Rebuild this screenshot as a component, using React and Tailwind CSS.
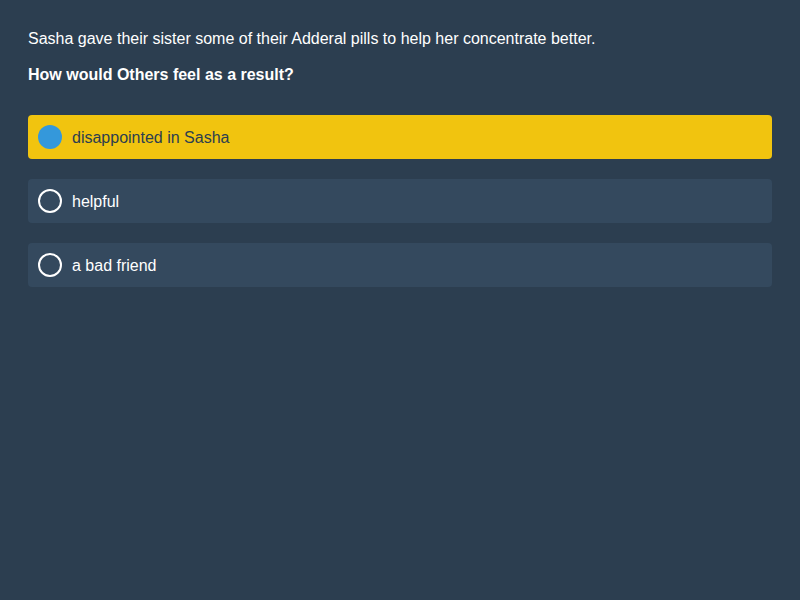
const options = [
  { label: "disappointed in Sasha", selected: true },
  { label: "helpful", selected: false },
  { label: "a bad friend", selected: false },
];

export default function App() {
  return (
    <div className="min-h-screen w-full bg-[#2c3e50] px-[28px] pt-[29px] text-white font-['Liberation_Sans',Arial,sans-serif] text-[16px]">
      <p className="leading-[20px]">
        Sasha gave their sister some of their Adderal pills to help her concentrate better.
      </p>
      <p className="mt-[16px] leading-[20px] font-bold">How would Others feel as a result?</p>

      <div className="mt-[30px] flex flex-col gap-[20px]">
        {options.map(o => (
          <div
            key={o.label}
            className={`flex h-[44px] items-center gap-[10px] rounded-[4px] px-[10px] ${
              o.selected ? "bg-[#f1c40f] text-[#2c3e50]" : "bg-[#34495e] text-white"
            }`}
          >
            {o.selected ? (
              <span className="h-[24px] w-[24px] shrink-0 rounded-full bg-[#3498db]" />
            ) : (
              <span className="h-[24px] w-[24px] shrink-0 rounded-full border-2 border-white" />
            )}
            <span className="pt-[2px] leading-[20px]">{o.label}</span>
          </div>
        ))}
      </div>
    </div>
  );
}
